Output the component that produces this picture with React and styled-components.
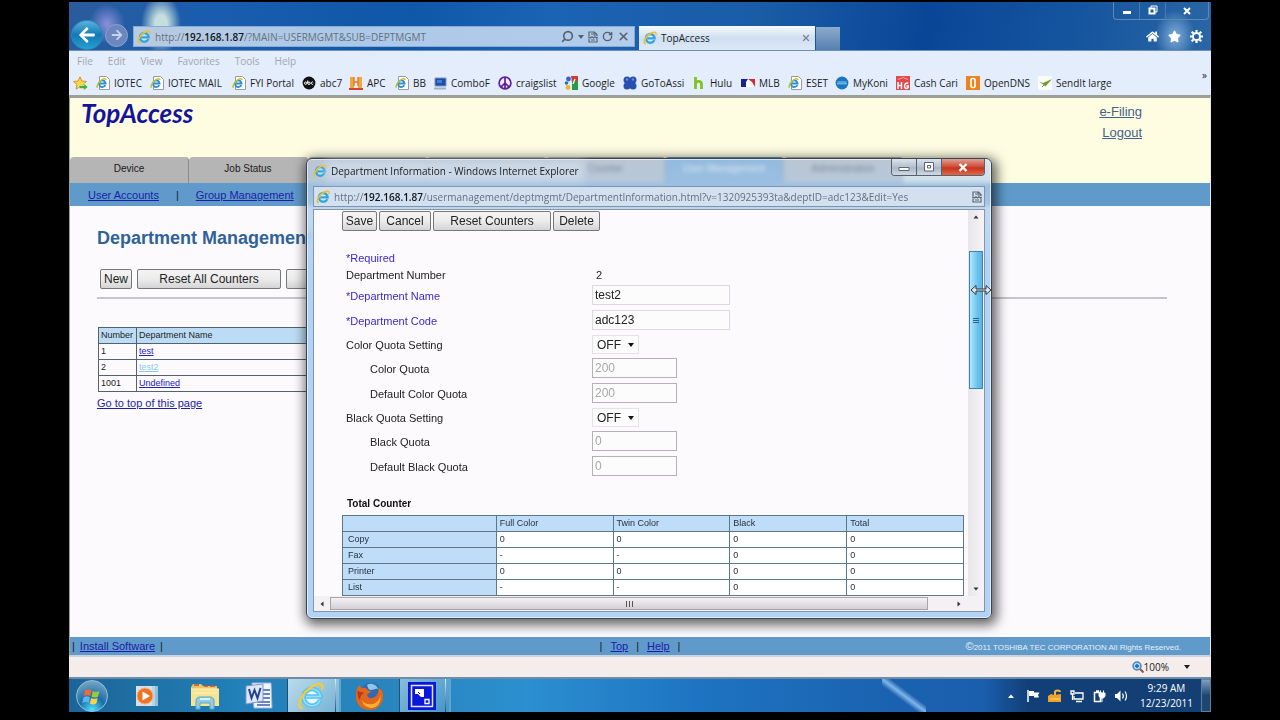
import React from 'react';

//Styled
import styled, { createGlobalStyle } from 'styled-components';

//Icons
import { FaArrowLeft, FaArrowRight, FaStar, FaHome } from 'react-icons/fa';
import { LuSearch, LuRotateCw, LuX } from 'react-icons/lu';

const uiFont = '"Open Sans", "Noto Sans", sans-serif';
const pageFont = '"Liberation Sans", Arial, sans-serif';

const favorites = [
    { name: 'IOTEC', icon: 'page', width: 54 },
    { name: 'IOTEC MAIL', icon: 'page', width: 82 },
    { name: 'FYI Portal', icon: 'page', width: 70 },
    { name: 'abc7', icon: 'abc', width: 47 },
    { name: 'APC', icon: 'apc', width: 46 },
    { name: 'BB', icon: 'page', width: 38 },
    { name: 'ComboF', icon: 'combo', width: 65 },
    { name: 'craigslist', icon: 'peace', width: 66 },
    { name: 'Google', icon: 'google', width: 59 },
    { name: 'GoToAssi', icon: 'goto', width: 69 },
    { name: 'Hulu', icon: 'hulu', width: 49 },
    { name: 'MLB', icon: 'mlb', width: 47 },
    { name: 'ESET', icon: 'page', width: 47 },
    { name: 'MyKoni', icon: 'koni', width: 61 },
    { name: 'Cash Cari', icon: 'cash', width: 70 },
    { name: 'OpenDNS', icon: 'dns', width: 72 },
    { name: 'SendIt large', icon: 'send', width: 76 },
];

const tabs = [
    { id: 'device', name: 'Device' },
    { id: 'job', name: 'Job Status' },
    { id: 'third' },
    { id: 'fourth' },
    { id: 'counter', name: 'Counter' },
    { id: 'users', name: 'User Management', active: true },
    { id: 'admin', name: 'Administration' },
];

const departments = [
    { number: '1', name: 'test' },
    { number: '2', name: 'test2', visited: true },
    { number: '1001', name: 'Undefined' },
];

const counters = [
    ['Copy', '0', '0', '0', '0'],
    ['Fax', '-', '-', '0', '0'],
    ['Printer', '0', '0', '0', '0'],
    ['List', '-', '-', '0', '0'],
];

//Icons
const IeIcon = ({ size = 14 }) => (
    <svg width={size} height={size} viewBox="0 0 16 16" aria-hidden="true">
        <circle cx="8.3" cy="8.3" r="4.6" fill="#d8f2fb" fillOpacity=".6" />
        <path d="M12.9 10.4A5 5 0 1 1 13.3 8.4H5" fill="none" stroke="#35a3dc" strokeWidth="2.7" />
        <path d="M2.5 14.6C-.6 13 3.5 5.2 9 2.5C12.6.8 15.6 1 14.8 4" fill="none" stroke="#f0c02c" strokeWidth="1.8" strokeLinecap="round" />
    </svg>
);

const PageIcon = () => (
    <svg width="14" height="14" viewBox="0 0 14 14" aria-hidden="true">
        <path d="M3.5.5h7l3 3v10h-10z" fill="#fff" stroke="#9a9a9a" />
        <path d="M9.3 9.1A3.3 3.3 0 1 1 9.6 7.5H4" fill="none" stroke="#2f8fd0" strokeWidth="1.8" />
        <path d="M1.5 11.8C0 10 3 5 6.5 3.4c2-.9 3.5-.6 3.3.6" fill="none" stroke="#c3c32c" strokeWidth="1.5" />
    </svg>
);

const FavIcon = ({ kind }) => {
    if (kind === 'page') return <PageIcon />;
    return (
        <svg width="14" height="14" viewBox="0 0 14 14" aria-hidden="true">
            {kind === 'abc' && (
                <g>
                    <circle cx="7" cy="7" r="6.4" fill="#111" />
                    <g fill="none" stroke="#fff" strokeWidth="1">
                        <circle cx="3.7" cy="7.2" r="1.2" />
                        <circle cx="7" cy="7.2" r="1.2" />
                        <path d="M5.7 4.5v3M11.2 6.3a1.2 1.2 0 1 0 0 1.8" />
                    </g>
                </g>
            )}
            {kind === 'apc' && (
                <g>
                    <path d="M1 1h4v11H1zM9 1h4v11H9z" fill="#f3a73a" />
                    <path d="M5 1v9M9 1v9M5 6h4" stroke="#e0762a" strokeWidth="1.3" />
                    <path d="M0 13h14" stroke="#d8452a" strokeWidth="2" />
                </g>
            )}
            {kind === 'combo' && (
                <g>
                    <path d="M2 2h11v8H2z" fill="#1d4fa8" stroke="#7f95b8" />
                    <path d="M4 4h5v3H4z" fill="#3f7fd6" />
                    <path d="M1 12.5h12" stroke="#9fb0c4" strokeWidth="2" />
                </g>
            )}
            {kind === 'peace' && (
                <g fill="none" stroke="#5a1f9c" strokeWidth="1.7">
                    <circle cx="7" cy="7" r="5.9" fill="#f3eafa" />
                    <path d="M7 1v12M7 7l-4.2 4.2M7 7l4.2 4.2" />
                </g>
            )}
            {kind === 'google' && (
                <g>
                    <path d="M7 0h7v6H8z" fill="#d63a2e" />
                    <path d="M8 5h6v9H8z" fill="#2a9a44" />
                    <path d="M11 3l-2 5" stroke="#fff" strokeWidth="1.3" fill="none" />
                    <circle cx="4.5" cy="3" r="2.4" fill="#3168cc" />
                    <circle cx="2.5" cy="7" r="1.8" fill="#3168cc" />
                    <circle cx="4" cy="11.5" r="2.4" fill="#f0b42a" />
                </g>
            )}
            {kind === 'goto' && (
                <g fill="#2a4fb0">
                    <path d="M4 4h6v6H4z" />
                    <circle cx="4" cy="4" r="3.5" />
                    <circle cx="10" cy="4" r="3.5" />
                    <circle cx="4" cy="10" r="3.5" />
                    <circle cx="10" cy="10" r="3.5" />
                    <circle cx="4" cy="3.5" r="1.2" fill="#6a8ae0" />
                    <circle cx="10" cy="3.5" r="1.2" fill="#6a8ae0" />
                </g>
            )}
            {kind === 'hulu' && (
                <path d="M3.5 1v12M3.5 8c0-3.5 6-3.5 6 0v5" fill="none" stroke="#7fc324" strokeWidth="2.8" />
            )}
            {kind === 'mlb' && (
                <g>
                    <path d="M0 3h14v8H0z" fill="#fff" />
                    <path d="M0 3h7L5 6v5H0z" fill="#1a2490" />
                    <path d="M7 3h7v8l-3-5z" fill="#d3273a" />
                </g>
            )}
            {kind === 'koni' && (
                <g>
                    <circle cx="7" cy="7" r="6.4" fill="#1877c0" />
                    <path d="M2.5 6h9M2 7.8h10" stroke="#8fd0f4" strokeWidth="1" />
                </g>
            )}
            {kind === 'cash' && (
                <g>
                    <path d="M0 0h14v14H0z" fill="#e2474b" />
                    <path d="M2 6v7M5.5 6v7M2 9.5h3.5M12.3 7.3c-4-2-5 5.3-2 5.3 1.5 0 2-.5 2-2.5h-2" fill="none" stroke="#fff" strokeWidth="1.5" />
                    <path d="M2 3.5l5-2 5 2" fill="none" stroke="#f3a3a3" />
                </g>
            )}
            {kind === 'dns' && (
                <g>
                    <path d="M0 0h14v14H0z" fill="#f0821c" />
                    <rect x="5" y="2.5" width="4" height="9" rx="1.5" fill="none" stroke="#fff" strokeWidth="1.7" />
                </g>
            )}
            {kind === 'send' && (
                <g>
                    <path d="M0 0h14v14H0z" fill="#fafdf6" />
                    <path d="M1 5.5l4 1.5 9-4-6.500 7.5L5 8.5z" fill="#6f9f38" />
                    <path d="M4 11l2-2" stroke="#6f9f38" />
                </g>
            )}
        </svg>
    );
};

const AddFavorite = () => (
    <svg width="15" height="15" viewBox="0 0 15 15" aria-hidden="true">
        <path d="M7 .8l1.9 4.2 4.6.5-3.4 3.1.9 4.5L7 10.9l-4 2.2.9-4.5L.5 5.5 5.1 5z" fill="#f8d44c" stroke="#d99a1c" />
        <path d="M6 9.5h5v-2l4 3.5-4 3.5v-2H6z" fill="#46b036" stroke="#fff" strokeWidth=".5" />
    </svg>
);

const CompatIcon = () => (
    <svg width="10" height="12" viewBox="0 0 10 12" fill="none" stroke="#5b6675" strokeWidth="1.2" aria-hidden="true">
        <path d="M1 5V1h5.5L9 3.5V5M6 1v3h3M1 7.5V11h8V7.5M0 6.2h1.5l1 .8L4 5.800 5.500 7 7 5.8l1.5 1 1.5-.6M3 9h4M3 3h2" />
    </svg>
);

const GearIcon = () => (
    <svg width="13" height="13" viewBox="0 0 13 13" fill="none" stroke="#fff" aria-hidden="true">
        <circle cx="6.5" cy="6.5" r="3.6" strokeWidth="2" />
        <path d="M6.5 0v2M6.5 11v2M0 6.5h2M11 6.5h2M1.700 1.700l1.600 1.600M9.700 9.700l1.600 1.600M1.700 11.300l1.600-1.600M9.700 3.300l1.600-1.600" strokeWidth="2.2" />
    </svg>
);

const CaretDown = () => (
    <svg width="6" height="4" viewBox="0 0 6 4" aria-hidden="true"><path d="M0 0h6L3 4z" fill="currentColor" /></svg>
);

const Caret = ({ turn = 0 }) => (
    <svg width="6" height="6" viewBox="0 0 6 6" aria-hidden="true">
        <path d="M.5 4.5L3 1.5l2.5 3z" fill="#333" transform={`rotate(${turn} 3 3)`} />
    </svg>
);

const StartOrb = () => (
    <svg width="34" height="34" viewBox="0 0 34 34" aria-hidden="true">
        <defs>
            <radialGradient id="orb" cx=".5" cy=".95" r=".95">
                <stop offset="0" stopColor="#4fe0ff" />
                <stop offset=".45" stopColor="#1b6da8" />
                <stop offset="1" stopColor="#7ba6c4" />
            </radialGradient>
        </defs>
        <circle cx="17" cy="17" r="15.5" fill="url(#orb)" stroke="#8cc0dc" />
        <path d="M10 11.5c2.5-1.4 4.5-1.3 6.5-.2L15.3 17c-2-1.1-4-1.2-6.5.1z" fill="#ef6a35" />
        <path d="M17.8 11.9c2 1.1 4 1.2 6.7 0L23 17.7c-2.5 1.2-4.5 1.1-6.5 0z" fill="#9acb3c" />
        <path d="M8.5 18.3c2.5-1.3 4.5-1.2 6.5-.1l-1.3 5.6c-2-1.1-4-1.2-6.5.1z" fill="#5ab4f0" />
        <path d="M16.2 18.9c2 1.1 4 1.2 6.5 0L21.3 24.6c-2.5 1.2-4.5 1.1-6.4 0z" fill="#fbd245" />
    </svg>
);

const MediaPlayer = () => (
    <svg width="24" height="24" viewBox="0 0 24 24" aria-hidden="true">
        <path d="M9 2h14v20H9z" fill="#8fc0dc" />
        <path d="M5 2h15v20H5z" fill="#b9d6e6" />
        <path d="M1 2h16v20H1z" fill="#d3e2ea" />
        <circle cx="10" cy="12" r="8" fill="#ee7424" stroke="#f8b07c" />
        <path d="M7.5 7.5l7.5 4.5-7.5 4.5z" fill="#fff" />
    </svg>
);

const Explorer = () => (
    <svg width="30" height="28" viewBox="0 0 30 28" aria-hidden="true">
        <path d="M1 5l2-3h8l2 2h14v19H1z" fill="#e6c566" />
        <path d="M4 3h5M14 4h4M20 4h5" stroke="#d04a3a" strokeWidth="1.5" />
        <path d="M1 7h28v17H1z" fill="#f8e391" />
        <path d="M1 7h28M3 11h24" stroke="#fff4c0" />
        <path d="M6 27v-8c0-3 2-4 4-4h10c2 0 4 1 4 4v8h-4v-6H10v6z" fill="#8fcde8" stroke="#5ba6cb" />
        <path d="M10 17h10" stroke="#d8f2fb" strokeWidth="2" />
    </svg>
);

const Word = () => (
    <svg width="28" height="28" viewBox="0 0 28 28" aria-hidden="true">
        <path d="M7 1h19l1 25H9z" fill="#f3f6fc" stroke="#a6b6d8" />
        <path d="M18 8h7M18 12h7M18 16h7M12 20h13M12 23h13" stroke="#3d5fb0" strokeWidth="1.5" />
        <path d="M1 4l17-2v17l-17 3z" fill="#dfe8f8" stroke="#7c95cc" />
        <path d="M4 7l2.5 9L9.5 8l3 8L15.5 6" fill="none" stroke="#23418f" strokeWidth="2" />
    </svg>
);

const Firefox = () => (
    <svg width="30" height="30" viewBox="0 0 30 30" aria-hidden="true">
        <circle cx="16" cy="12" r="10.5" fill="#3268b4" />
        <path d="M12 4c4-3 10 0 11 4-3-1-4 1-7 1s-3-3-4-5z" fill="#8cc8ea" />
        <path d="M2 8c0 0 1-3 3-4 0 2 1 3 2 3 3-1 5 1 5 1 1 2 4 2 4 2 0 2-3 2-4 4 1 4 6 4 9 1 3-3 3-7 2-9 4 3 6 6 5 11-1 7-6 12-13 12C7 29 1 24 1 16c0-3 0-5 1-8z" fill="#e2661c" />
        <path d="M24 8c3 5 1 13-6 15-4 1-9 0-11-4 1 6 6 8 10 8 7-1 11-8 7-19z" fill="#f9b233" />
        <path d="M3 9c-1 5 0 8 2 10 0-4 2-6 4-7-2-2-5 0-6-3z" fill="#b93a16" />
    </svg>
);

const SquaresApp = () => (
    <svg width="28" height="28" viewBox="0 0 28 28" aria-hidden="true">
        <path d="M0 0h28v28H0z" fill="#0a16d8" />
        <path d="M3.5 3.5h21v21h-21z" fill="none" stroke="#dfe6ff" strokeWidth="1.5" />
        <path d="M7 7h9v8h-3l-3-3H7z" fill="#fff" />
        <path d="M10 10l2 2" stroke="#0a16d8" />
        <path d="M17 17.5h4v4h-4z" fill="none" stroke="#fff" strokeWidth="1.3" />
    </svg>
);

const BigIe = () => (
    <svg width="28" height="28" viewBox="0 0 30 30" aria-hidden="true">
        <circle cx="16" cy="15.5" r="8" fill="#e3f7fd" />
        <path d="M24.5 19.5A9 9 0 1 1 25 15.5H10" fill="none" stroke="#58c4ee" strokeWidth="5" />
        <path d="M24.5 19.5A9 9 0 1 1 25 15.5H10" fill="none" stroke="#9be0f7" strokeWidth="1.5" />
        <path d="M5 28C-1 25 5 12 16 5c6-4 13-4 11 2" fill="none" stroke="#f3cb36" strokeWidth="2.6" strokeLinecap="round" />
    </svg>
);

const TrayIcon = ({ kind }) => (
    <svg width="14" height="14" viewBox="0 0 14 14" aria-hidden="true">
        {kind === 'up' && <path d="M4 9l3-3.5L10 9z" fill="#fff" />}
        {kind === 'flag' && (
            <g>
                <path d="M2 1v12" stroke="#fff" strokeWidth="1.5" />
                <path d="M3 2h5v1.5h5.5L12 6l1 2.5H8V7H3z" fill="#fff" />
            </g>
        )}
        {kind === 'lock' && (
            <g>
                <path d="M0 7l3-2 3 1 7-1v8H0z" fill="#f2a124" />
                <path d="M7 6V3c0-2 5-2 5 0" fill="none" stroke="#f5b63f" strokeWidth="2" />
                <path d="M2 10h10" stroke="#ffd684" />
            </g>
        )}
        {kind === 'net' && (
            <g fill="none" stroke="#fff" strokeWidth="1.3">
                <path d="M5 4h8v6H4V7M6 12.5h6" />
                <path d="M1 2h3v3H1zM2.5 5v6" />
            </g>
        )}
        {kind === 'plug' && (
            <g>
                <path d="M2.5 3.5h6v9h-6zM4 2h3" fill="none" stroke="#fff" strokeWidth="1.5" />
                <path d="M7 4h6v3l-1.5 2H8.5L7 7zM8.5 1.5v3M11.5 1.5v3M10 9v4" fill="#fff" stroke="#fff" />
            </g>
        )}
        {kind === 'sound' && (
            <g>
                <path d="M1 5h2l3.5-3.5v11L3 9H1z" fill="#fff" />
                <path d="M8.5 4.5c1 1.5 1 3.5 0 5M11 2.5c2 2.5 2 6.5 0 9" fill="none" stroke="#fff" strokeWidth="1.2" />
            </g>
        )}
    </svg>
);

const DepartmentWindow = () => (
    <Popup>
        <PopupTitle>
            <IeIcon size={14} />
            <PopupName>Department Information - Windows Internet Explorer</PopupName>
            <PopupControls>
                <GlassButton aria-label="Minimize">
                    <svg width="12" height="10" viewBox="0 0 12 10"><path d="M1 5.5h10v3H1z" fill="#fff" stroke="#5a6674" /></svg>
                </GlassButton>
                <GlassButton aria-label="Maximize">
                    <svg width="12" height="10" viewBox="0 0 12 10"><path d="M1.5.5h9v8.5h-9z" fill="#fff" stroke="#5a6674" /><path d="M4.5 3.5h3v2.5h-3z" fill="none" stroke="#5a6674" /></svg>
                </GlassButton>
                <GlassButton aria-label="Close" $close>
                    <svg width="10" height="9" viewBox="0 0 10 9"><path d="M1.5 1l7 7M8.5 1l-7 7" stroke="#fff" strokeWidth="2.4" /></svg>
                </GlassButton>
            </PopupControls>
        </PopupTitle>
        <PopupAddress>
            <IeIcon />
            <Url><span>http://</span><b>192.168.1.87</b>/usermanagement/deptmgmt/DepartmentInformation.html?v=1320925393ta&amp;deptID=adc123&amp;Edit=Yes</Url>
            <CompatIcon />
        </PopupAddress>
        <PopupBody>
            <PopupContent>
                <ButtonRow $tight>
                    <PageButton $width={35}>Save</PageButton>
                    <PageButton $width={52}>Cancel</PageButton>
                    <PageButton $width={118}>Reset Counters</PageButton>
                    <PageButton $width={47}>Delete</PageButton>
                </ButtonRow>
                <Form onSubmit={e => e.preventDefault()}>
                    <Row $required><span>*Required</span></Row>
                    <Row><span>Department Number</span><Value>2</Value></Row>
                    <Row $required><label htmlFor="name">*Department Name</label><TextBox id="name" defaultValue="test2" /></Row>
                    <Row $required><label htmlFor="code">*Department Code</label><TextBox id="code" defaultValue="adc123" /></Row>
                    <Row>
                        <label htmlFor="colorset">Color Quota Setting</label>
                        <Dropdown><select id="colorset"><option>OFF</option><option>ON</option></select><CaretDown /></Dropdown>
                    </Row>
                    <Row $indent><label htmlFor="color">Color Quota</label><TextBox id="color" defaultValue="200" disabled /></Row>
                    <Row $indent><label htmlFor="defcolor">Default Color Quota</label><TextBox id="defcolor" defaultValue="200" disabled /></Row>
                    <Row>
                        <label htmlFor="blackset">Black Quota Setting</label>
                        <Dropdown><select id="blackset"><option>OFF</option><option>ON</option></select><CaretDown /></Dropdown>
                    </Row>
                    <Row $indent><label htmlFor="black">Black Quota</label><TextBox id="black" defaultValue="0" disabled /></Row>
                    <Row $indent><label htmlFor="defblack">Default Black Quota</label><TextBox id="defblack" defaultValue="0" disabled /></Row>
                </Form>
                <CounterTable>
                    <caption>Total Counter</caption>
                    <colgroup>
                        <col width="25%" /><col width="19%" /><col width="19%" /><col width="19%" /><col width="19%" />
                    </colgroup>
                    <thead>
                        <tr><td></td><th>Full Color</th><th>Twin Color</th><th>Black</th><th>Total</th></tr>
                    </thead>
                    <tbody>
                        {counters.map(([name, ...values]) => (
                            <tr key={name}>
                                <th>{name}</th>
                                {values.map((value, i) => <td key={i}>{value}</td>)}
                            </tr>
                        ))}
                    </tbody>
                </CounterTable>
            </PopupContent>
            <VerticalBar>
                <Caret />
                <VerticalThumb><i /><i /><i /></VerticalThumb>
                <Caret turn={180} />
            </VerticalBar>
            <HorizontalBar>
                <Caret turn={270} />
                <HorizontalThumb><i /><i /><i /></HorizontalThumb>
                <Caret turn={90} />
            </HorizontalBar>
        </PopupBody>
        <ResizeCursor width="22" height="12" viewBox="0 0 22 12" aria-hidden="true">
            <path d="M1 6l5-4.5V5h10V1.5L21 6l-5 4.5V7H6v3.5z" fill="#dbe8f2" stroke="#333" />
        </ResizeCursor>
    </Popup>
);

const App = () => {
    return (
        <Screen>
            <GlobalStyle />
            <Chrome>
                <NavButtons>
                    <BackButton aria-label="Back"><FaArrowLeft size={18} /></BackButton>
                    <ForwardButton aria-label="Forward"><FaArrowRight size={12} /></ForwardButton>
                </NavButtons>
                <AddressBar>
                    <IeIcon />
                    <Url><span>http://</span><b>192.168.1.87</b>/?MAIN=USERMGMT&amp;SUB=DEPTMGMT</Url>
                    <AddressTools>
                        <SearchIcon size={13} strokeWidth={3} />
                        <CaretDown />
                        <CompatIcon />
                        <LuRotateCw size={11} strokeWidth={3} />
                        <LuX size={13} strokeWidth={3} />
                    </AddressTools>
                </AddressBar>
                <BrowserTab>
                    <IeIcon />
                    <span>TopAccess</span>
                    <LuX size={10} strokeWidth={3} color="#7b8490" />
                </BrowserTab>
                <NewTab aria-label="New tab" />
                <ChromeRight>
                    <Controls>
                        <button aria-label="Minimize"><svg width="10" height="8" viewBox="0 0 10 8"><path d="M1 4h8v3H1z" fill="#fff" /></svg></button>
                        <button aria-label="Restore"><svg width="10" height="10" viewBox="0 0 10 10"><path d="M3 3V1h6v6H7" fill="none" stroke="#fff" /><path d="M1.5 3.5h5v5h-5z" fill="none" stroke="#fff" strokeWidth="2" /></svg></button>
                        <button aria-label="Close"><svg width="8" height="8" viewBox="0 0 8 8"><path d="M1 1l6 6M7 1L1 7" stroke="#fff" strokeWidth="2" /></svg></button>
                    </Controls>
                    <Tools>
                        <FaHome size={13} />
                        <FaStar size={13} />
                        <GearIcon />
                    </Tools>
                </ChromeRight>
            </Chrome>
            <MenuBar>
                {['File', 'Edit', 'View', 'Favorites', 'Tools', 'Help'].map(item => <button key={item}>{item}</button>)}
            </MenuBar>
            <FavoritesBar>
                <AddFavorite />
                {favorites.map(item => (
                    <Favorite key={item.name} $width={item.width}><FavIcon kind={item.icon} />{item.name}</Favorite>
                ))}
                <More>»</More>
            </FavoritesBar>

            <Page>
                <Banner>
                    <Logo>TopAccess</Logo>
                    <BannerLinks>
                        <a href="#filing">e-Filing</a>
                        <a href="#logout">Logout</a>
                    </BannerLinks>
                </Banner>
                <Tabs>
                    {tabs.map(tab => <Tab key={tab.id} $active={tab.active}>{tab.name}</Tab>)}
                </Tabs>
                <SubNav>
                    <a href="#users">User Accounts</a>
                    <span>|</span>
                    <a href="#groups">Group Management</a>
                </SubNav>
                <Content>
                    <Title>Department Management</Title>
                    <ButtonRow>
                        <PageButton $width={32}>New</PageButton>
                        <PageButton $width={144}>Reset All Counters</PageButton>
                        <PageButton $width={120} aria-label="Export" />
                    </ButtonRow>
                    <Line />
                    <DepartmentTable>
                        <thead>
                            <tr><th>Number</th><th>Department Name</th></tr>
                        </thead>
                        <tbody>
                            {departments.map(item => (
                                <tr key={item.number}>
                                    <td>{item.number}</td>
                                    <td><TableLink href="#edit" $visited={item.visited}>{item.name}</TableLink></td>
                                </tr>
                            ))}
                        </tbody>
                    </DepartmentTable>
                    <TopLink href="#top">Go to top of this page</TopLink>
                </Content>
                <Footer>
                    <FooterLinks><span>|</span><a href="#install">Install Software</a><span>|</span></FooterLinks>
                    <FooterLinks $wide><span>|</span><a href="#top">Top</a><span>|</span><a href="#help">Help</a><span>|</span></FooterLinks>
                    <Copyright><big>©</big>2011 TOSHIBA TEC CORPORATION All Rights Reserved.</Copyright>
                </Footer>
            </Page>

            <StatusBar>
                <svg width="12" height="12" viewBox="0 0 12 12" aria-hidden="true">
                    <circle cx="5" cy="5" r="4" fill="#a8d4f4" stroke="#4c86bc" strokeWidth="1.5" />
                    <path d="M3 5h4M5 3v4" stroke="#1d5f9f" strokeWidth="1.3" />
                    <path d="M8 8l3.5 3.5" stroke="#8a5a3a" strokeWidth="2" />
                </svg>
                <span>100%</span>
                <CaretDown />
            </StatusBar>

            <Taskbar>
                <TaskButton $width={46} aria-label="Start"><StartOrb /></TaskButton>
                <TaskButton $width={64} aria-label="Media Player"><MediaPlayer /></TaskButton>
                <TaskButton $width={52} aria-label="Explorer"><Explorer /></TaskButton>
                <TaskButton $width={56} aria-label="Word"><Word /></TaskButton>
                <TaskButton $width={54} aria-label="Internet Explorer" $open $bright><BigIe /></TaskButton>
                <TaskButton $width={58} aria-label="Firefox"><Firefox /></TaskButton>
                <TaskButton $width={52} aria-label="Remote" $open><SquaresApp /></TaskButton>
                <Tray>
                    {['up', 'flag', 'lock', 'net', 'plug', 'sound'].map(kind => <TrayIcon key={kind} kind={kind} />)}
                </Tray>
                <Clock><span>9:29 AM</span><span>12/23/2011</span></Clock>
                <ShowDesktop aria-label="Show desktop" />
            </Taskbar>

            <DepartmentWindow />
        </Screen>
    );
}

const GlobalStyle = createGlobalStyle`
    * { box-sizing: border-box; }
    body { margin: 0; background: #000; }
    button { font: inherit; color: inherit; cursor: pointer; }
    svg { flex: none; }
`;

const Screen = styled.div`
    position: relative;
    display: flex;
    flex-direction: column;
    min-height: 100vh;
    padding: 2px 69px 8px;
    background: #000;
    font-family: ${uiFont};
    font-size: 10px;
    color: #1c1c1c;
    overflow: hidden;
`;

const Chrome = styled.div`
    display: flex;
    align-items: flex-end;
    height: 49px;
    border-bottom: 1px solid #6f8fb8;
    background:
        radial-gradient(ellipse 18px 20px at 38px 22px, rgba(150, 150, 225, .9), transparent),
        radial-gradient(ellipse 20px 30px at 92px 22px, rgba(205, 230, 225, .95) 30%, transparent),
        radial-gradient(ellipse 20px 26px at calc(100% - 36px) 34px, rgba(150, 190, 230, .8), transparent),
        linear-gradient(100deg, #2a5c9c 0, #1a5dae 12%, #0f57a8 30%, #1b63b4 42%, #1a5ca6 60%, #0a4697 75%, #15559f 88%, #2a66a4 100%);
`;

const NavButtons = styled.div`
    display: flex;
    align-items: center;
    gap: 2px;
    width: 64px;
    padding-left: 2px;
`;

const BackButton = styled.button`
    display: grid;
    place-items: center;
    width: 32px;
    height: 30px;
    padding: 0;
    border: 1px solid #2b88bc;
    border-radius: 50%;
    background: linear-gradient(#58b4dc, #1379b4 50%, #26a0d0);
    color: #fff;
`;

const ForwardButton = styled.button`
    display: grid;
    place-items: center;
    width: 23px;
    height: 23px;
    padding: 0;
    border: 1px solid #8ba3cc;
    border-radius: 50%;
    background: #6c86bf;
    color: #c6d3ec;
`;

const AddressBar = styled.div`
    display: flex;
    align-items: center;
    gap: 4px;
    flex: 0 1 502px;
    height: 21px;
    margin-bottom: 3px;
    padding: 0 4px 0 3px;
    border: 1px solid #87abd4;
    background: linear-gradient(90deg, #b7cbe2, #acc8e8 40%, #b3cdeb);
`;

const Url = styled.div`
    flex: 1;
    color: #66707c;
    font-size: 10px;
    white-space: nowrap;

    b {
        font-weight: 600;
        color: #10151c;
    }
`;

const AddressTools = styled.div`
    display: flex;
    align-items: center;
    gap: 4px;
    color: #56606e;
`;

const SearchIcon = styled(LuSearch)`
    transform: scaleX(-1);
`;

const BrowserTab = styled.div`
    display: flex;
    align-items: center;
    gap: 4px;
    flex: 0 1 176px;
    height: 24px;
    margin-left: 4px;
    padding: 0 4px;
    background: linear-gradient(#f6fafe, #cfdff0 50%, #dce8f8);
    font-size: 10px;

    span {
        flex: 1;
    }
`;

const NewTab = styled.button`
    width: 24px;
    height: 23px;
    margin-left: 1px;
    border: 0;
    background: linear-gradient(#8cabcc, #5580b0);
`;

const ChromeRight = styled.div`
    display: flex;
    flex-direction: column;
    align-items: flex-end;
    justify-content: space-between;
    align-self: stretch;
    margin-left: auto;
`;

const Controls = styled.div`
    display: flex;
    margin-right: 2px;
    border: 1px solid #5f88b8;
    border-top: 0;
    border-radius: 0 0 4px 4px;

    button {
        width: 26px;
        height: 17px;
        padding: 0;
        border: 0;
        border-right: 1px solid #4d78ad;
        background: none;
    }
    button:last-child {
        width: 42px;
        border-right: 0;
    }
`;

const Tools = styled.div`
    display: flex;
    gap: 9px;
    padding: 0 8px 7px 0;
    color: #fff;
`;

const MenuBar = styled.div`
    display: flex;
    gap: 15px;
    height: 20px;
    padding-left: 8px;
    background: #e3edfc;

    button {
        padding: 0;
        border: 0;
        background: none;
        color: #a2a6ae;
    }
`;

const FavoritesBar = styled.div`
    display: flex;
    align-items: center;
    height: 24px;
    padding: 0 4px;
    background: #e3edfc;

    > svg {
        margin-right: 8px;
    }
`;

const Favorite = styled.button`
    display: flex;
    align-items: center;
    gap: 4px;
    width: ${props => props.$width}px;
    padding: 0;
    border: 0;
    background: none;
    white-space: nowrap;
`;

const More = styled.button`
    align-self: flex-start;
    margin-left: auto;
    padding: 0;
    border: 0;
    background: none;
    line-height: 8px;
`;

const Page = styled.main`
    display: flex;
    flex: 1;
    flex-direction: column;
    border-top: 3px solid #9c9e98;
    border-left: 1px solid #9c9e98;
    border-right: 1px solid #e8e8f0;
    background: #fcfafc;
    font-family: ${pageFont};
    font-size: 11px;

    a {
        color: #1d1da8;
    }
`;

const Banner = styled.header`
    display: flex;
    justify-content: space-between;
    height: 59px;
    padding: 3px 68px 0 11px;
    background: #fefde2;
`;

const Logo = styled.div`
    color: #14149a;
    font-family: Lato, sans-serif;
    font-size: 26px;
    font-style: italic;
    font-weight: 700;
    line-height: 24px;
`;

const BannerLinks = styled.nav`
    display: flex;
    flex-direction: column;
    align-items: flex-end;
    font-size: 13px;
    line-height: 21px;

    a {
        color: #44618c;
    }
`;

const Tabs = styled.nav`
    display: flex;
    background: #fefde2;
`;

const Tab = styled.button`
    width: 119px;
    height: 26px;
    padding: 0 0 4px;
    border: 0;
    border-right: 1px solid #8c8c8c;
    border-radius: 4px 4px 0 0;
    background: ${props => props.$active ? '#5f9aca' : '#b5b5b5'};
    color: ${props => props.$active ? '#fff' : '#1a1a1a'};
    font-size: 10px;
`;

const SubNav = styled.nav`
    display: flex;
    align-items: center;
    gap: 17px;
    height: 23px;
    padding-left: 18px;
    background: #5f9aca;
`;

const Content = styled.section`
    flex: 1;
    padding: 21px 43px 0 27px;
`;

const Title = styled.h1`
    margin: 0 0 20px;
    color: #2f6299;
    font-size: 18px;
    line-height: 22px;
`;

const ButtonRow = styled.div`
    display: flex;
    gap: ${props => props.$tight ? 2 : 5}px;
    margin-left: ${props => props.$tight ? 0 : 3}px;
`;

const PageButton = styled.button`
    width: ${props => props.$width}px;
    height: 20px;
    padding: 0;
    border: 1px solid #77777a;
    border-radius: 2px;
    background: linear-gradient(#f4f4f4, #ececec 50%, #d4d4d6);
    color: #222;
    font-family: ${pageFont};
    font-size: 12px;
    line-height: 16px;
`;

const Line = styled.hr`
    height: 2px;
    margin: 8px 0 28px;
    border: 0;
    background: #c6c4c8;
`;

const DepartmentTable = styled.table`
    width: 80%;
    margin-left: 1px;
    border-collapse: collapse;
    font-size: 9px;
    line-height: 13px;

    th, td {
        height: 16px;
        padding: 1px 2px;
        border: 1px solid #52626e;
        text-align: left;
        font-weight: 400;
    }
    th {
        background: #bcdcf5;
    }
    th:first-child {
        width: 38px;
    }
`;

const TableLink = styled.a`
    && {
        color: ${props => props.$visited ? '#8ccbe8' : '#2424b8'};
    }
`;

const TopLink = styled.a`
    display: inline-block;
    margin-top: 5px;
`;

const Footer = styled.footer`
    display: grid;
    grid-template-columns: 1fr auto 1fr;
    align-items: center;
    height: 18px;
    padding: 0 2px;
    background: #5f9aca;
`;

const FooterLinks = styled.div`
    display: flex;
    gap: ${props => props.$wide ? 8 : 5}px;
`;

const Copyright = styled.div`
    justify-self: end;
    margin-right: 27px;
    color: #e6f0fa;
    font-size: 8px;

    big {
        font-size: 11px;
    }
`;

const StatusBar = styled.div`
    display: flex;
    align-items: center;
    justify-content: flex-end;
    height: 22px;
    padding-right: 21px;
    border-top: 2px solid #c9d2de;
    background: #f5edec;

    span {
        margin: 0 15px 0 0;
    }
`;

const Taskbar = styled.div`
    display: flex;
    align-items: center;
    height: 35px;
    border-top: 2px solid #6d8ca8;
    background:
        linear-gradient(to top right, transparent 40%, rgba(140, 190, 240, .9) 50%, transparent 60%) 74% 0 / 44px 100% no-repeat,
        linear-gradient(90deg, #1c6496 0, #2181b8 15%, #2a86be 30%, #2b8fd0 40%, #1e74c2 55%, #1a62b0 72%, #1a5fae 80%, #123f78 84%, #143f73 100%);
`;

const TaskButton = styled.button`
    display: grid;
    place-items: center;
    width: ${props => props.$width}px;
    height: 100%;
    padding: 0;
    border: 0;
    background: none;
    ${props => props.$open && `
        padding-right: 6px;
        border-left: 1px solid #1f5078;
        border-right: 2px solid #5fa6cc;
        background:
            linear-gradient(#e0f2fa, #1f5078) right 3px top / 1px 100% no-repeat,
            linear-gradient(135deg, rgba(255, 255, 255, ${props.$bright ? .7 : .45}), rgba(190, 225, 240, ${props.$bright ? .5 : .15}));
    `}
`;

const Tray = styled.div`
    display: flex;
    gap: 8px;
    margin-left: auto;
    margin-right: 12px;
`;

const Clock = styled.time`
    display: flex;
    flex-direction: column;
    align-items: center;
    color: #fff;
    line-height: 15px;
`;

const ShowDesktop = styled.button`
    width: 10px;
    height: 100%;
    margin-left: 8px;
    padding: 0;
    border: 1px solid #5c80a4;
    background: linear-gradient(#7f9fbe, #1e466f 50%);
`;

const Popup = styled.section`
    position: absolute;
    top: 158px;
    left: 306px;
    width: 686px;
    padding: 0 6px 6px;
    border: 1px solid #3a4552;
    border-radius: 6px;
    background: linear-gradient(rgba(190, 212, 236, .55), rgba(180, 208, 238, .8) 50px, #b3d3f6 100px);
    box-shadow: inset 0 0 0 1px rgba(255, 255, 255, .6), 2px 3px 12px 3px rgba(0, 0, 0, .6);
    backdrop-filter: blur(2px);
`;

const PopupTitle = styled.div`
    display: flex;
    align-items: center;
    gap: 4px;
    height: 27px;
    padding: 0 0 3px;
`;

const PopupName = styled.h2`
    margin: 0;
    background: rgba(220, 232, 245, .5);
    box-shadow: 0 0 8px 5px rgba(220, 232, 245, .5);
    font-size: 10px;
    font-weight: 400;
    line-height: 12px;
`;

const PopupControls = styled.div`
    display: flex;
    align-self: flex-start;
    margin-left: auto;
    border: 1px solid #56626e;
    border-top: 0;
    border-radius: 0 0 4px 4px;
    overflow: hidden;
`;

const GlassButton = styled.button`
    display: grid;
    place-items: center;
    width: ${props => props.$close ? 42 : 25}px;
    height: 16px;
    padding: 0;
    border: 0;
    border-right: ${props => props.$close ? 0 : 1}px solid #56626e;
    background: ${props => props.$close
        ? 'linear-gradient(#e0a094, #cc4a34 50%, #c8321c 55%, #dc6a4c)'
        : 'linear-gradient(#dbe3ec, #b4c0ce 50%, #a8b6c6 55%, #d0dae4)'};
`;

const PopupAddress = styled.div`
    display: flex;
    align-items: center;
    gap: 4px;
    height: 21px;
    margin-bottom: 2px;
    padding: 0 2px;
    border: 1px solid #7f93aa;
    background: #d3e0ef;
`;

const PopupBody = styled.div`
    display: grid;
    grid-template-columns: minmax(0, 1fr) 16px;
    border: 1px solid #8296ac;
    background: #fcfafc;
    font-family: ${pageFont};
`;

const PopupContent = styled.div`
    padding: 1px 4px 0 28px;
`;

const Form = styled.form`
    padding: 18px 0 18px 4px;
    font-size: 11px;
`;

const Row = styled.div`
    display: grid;
    grid-template-columns: 246px 1fr;
    align-items: center;
    min-height: 17px;
    color: ${props => props.$required ? '#3a2ac8' : '#222'};

    > :first-child {
        padding-left: ${props => props.$indent ? 24 : 0}px;
    }
`;

const Value = styled.span`
    padding-left: 4px;
`;

const TextBox = styled.input`
    width: ${props => props.disabled ? 85 : 138}px;
    height: 20px;
    margin: 2px 0 3px;
    padding: 0 2px;
    border: 1px solid ${props => props.disabled ? '#b4b2b6' : '#dcdade'};
    background: #fdfcfd;
    color: ${props => props.disabled ? '#a8a8a8' : '#222'};
    font-family: ${pageFont};
    font-size: 12px;
`;

const Dropdown = styled.div`
    display: grid;
    align-items: center;
    width: 47px;
    margin: 2px 0;

    select, svg {
        grid-area: 1 / 1;
    }
    svg {
        justify-self: end;
        margin-right: 5px;
        color: #111;
        pointer-events: none;
    }
    select {
        height: 19px;
        padding: 0 4px;
        border: 1px solid #e4e2e6;
        background: #fdfcfd;
        color: #222;
        font-family: ${pageFont};
        font-size: 12px;
        appearance: none;
    }
`;

const CounterTable = styled.table`
    width: 100%;
    table-layout: fixed;
    border-collapse: collapse;
    font-size: 9px;
    line-height: 13px;

    caption {
        padding: 0 5px 4px;
        color: #111;
        font-size: 10px;
        font-weight: 700;
        line-height: 14px;
        text-align: left;
    }
    th, td {
        height: 16px;
        padding: 1px 3px;
        border: 1px solid #5d7886;
        background: #fff;
        color: #26323e;
        font-weight: 400;
        text-align: left;
    }
    thead td, th {
        background: #bfdcf9;
    }
    tbody th {
        padding-left: 5px;
    }
`;

const VerticalBar = styled.div`
    display: flex;
    flex-direction: column;
    align-items: center;
    padding: 4px 0;
    background: linear-gradient(90deg, #e8e6e8, #f6f4f6);

    > :last-child {
        margin-top: auto;
    }
`;

const VerticalThumb = styled.div`
    display: flex;
    flex-direction: column;
    align-items: center;
    justify-content: center;
    gap: 1px;
    width: 14px;
    height: 138px;
    margin-top: 31px;
    border: 1px solid #3f83a8;
    background: linear-gradient(90deg, #b4e6fa, #6cc4ee 60%, #56b4e4);

    i {
        width: 6px;
        height: 1px;
        background: #2b6488;
    }
`;

const HorizontalBar = styled.div`
    display: flex;
    align-items: center;
    grid-column: 1 / 3;
    gap: 5px;
    height: 15px;
    padding: 0 22px 0 5px;
    background: #f3f1f3;
`;

const HorizontalThumb = styled.div`
    display: flex;
    align-items: center;
    justify-content: center;
    gap: 2px;
    flex: 1;
    height: 13px;
    margin-right: 23px;
    border: 1px solid #a8a6aa;
    background: linear-gradient(#f4f2f4, #d2d0d4);

    i {
        width: 1px;
        height: 6px;
        background: #555;
    }
`;

const ResizeCursor = styled.svg`
    position: absolute;
    top: 125px;
    right: -1px;
`;

export default App
